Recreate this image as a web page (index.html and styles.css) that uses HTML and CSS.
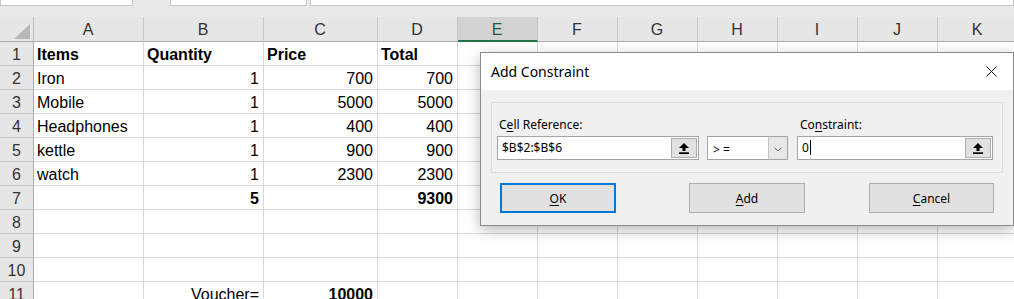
FILE: index.html
```html
<!DOCTYPE html>
<html lang="en">
<head>
  <meta charset="UTF-8" />
  <title>Add Constraint</title>
  <link rel="stylesheet" href="styles.css">
</head>
<body>
  <div class="formula-strip">
    <div class="name-box"></div>
    <div class="fx-box"></div>
    <div class="formula-box"></div>
  </div>

  <div class="sheet">
    <!-- column headers -->
    <div class="corner"><svg width="16" height="15" viewBox="0 0 16 15"><polygon points="16,0 16,15 0,15" fill="#b8b8b8"/></svg></div>
    <div class="col-head">A</div>
    <div class="col-head">B</div>
    <div class="col-head">C</div>
    <div class="col-head">D</div>
    <div class="col-head active">E</div>
    <div class="col-head">F</div>
    <div class="col-head">G</div>
    <div class="col-head">H</div>
    <div class="col-head">I</div>
    <div class="col-head">J</div>
    <div class="col-head">K</div>

    <div class="row-head">1</div>
    <div class="bold">Items</div><div class="bold">Quantity</div><div class="bold">Price</div><div class="bold">Total</div>
    <div></div><div></div><div></div><div></div><div></div><div></div><div></div>

    <div class="row-head">2</div>
    <div>Iron</div><div class="num">1</div><div class="num">700</div><div class="num">700</div>
    <div></div><div></div><div></div><div></div><div></div><div></div><div></div>

    <div class="row-head">3</div>
    <div>Mobile</div><div class="num">1</div><div class="num">5000</div><div class="num">5000</div>
    <div></div><div></div><div></div><div></div><div></div><div></div><div></div>

    <div class="row-head">4</div>
    <div>Headphones</div><div class="num">1</div><div class="num">400</div><div class="num">400</div>
    <div></div><div></div><div></div><div></div><div></div><div></div><div></div>

    <div class="row-head">5</div>
    <div>kettle</div><div class="num">1</div><div class="num">900</div><div class="num">900</div>
    <div></div><div></div><div></div><div></div><div></div><div></div><div></div>

    <div class="row-head">6</div>
    <div>watch</div><div class="num">1</div><div class="num">2300</div><div class="num">2300</div>
    <div></div><div></div><div></div><div></div><div></div><div></div><div></div>

    <div class="row-head">7</div>
    <div></div><div class="num bold">5</div><div></div><div class="num bold">9300</div>
    <div></div><div></div><div></div><div></div><div></div><div></div><div></div>

    <div class="row-head">8</div>
    <div></div><div></div><div></div><div></div>
    <div></div><div></div><div></div><div></div><div></div><div></div><div></div>

    <div class="row-head">9</div>
    <div></div><div></div><div></div><div></div>
    <div></div><div></div><div></div><div></div><div></div><div></div><div></div>

    <div class="row-head">10</div>
    <div></div><div></div><div></div><div></div>
    <div></div><div></div><div></div><div></div><div></div><div></div><div></div>

    <div class="row-head">11</div>
    <div></div><div class="num">Voucher=</div><div class="num bold">10000</div><div></div>
    <div></div><div></div><div></div><div></div><div></div><div></div><div></div>
  </div>

  <div class="dialog">
    <div class="dialog-title">
      <span>Add Constraint</span>
      <svg class="close" width="11" height="11" viewBox="0 0 11 11">
        <path d="M0.5 0.5 L10.5 10.5 M10.5 0.5 L0.5 10.5" stroke="#111" stroke-width="1"/>
      </svg>
    </div>

    <div class="dialog-body">
      <div class="group">
        <div class="field field-ref">
          <label>C<u>e</u>ll Reference:</label>
          <div class="picker">
            <span class="value">$B$2:$B$6</span>
            <span class="collapse-btn">
              <svg width="12" height="11" viewBox="0 0 12 11"><path d="M6 0 L11 5 H7.5 V8 H4.5 V5 H1 Z" fill="#000"/><rect x="1" y="9.3" width="10" height="1.7" fill="#000"/></svg>
            </span>
          </div>
        </div>

        <div class="field field-op">
          <div class="combo">
            <span class="value">&gt; =</span>
            <span class="combo-arrow">
              <svg width="8" height="5" viewBox="0 0 8 5"><path d="M0.5 0.5 L4 4 L7.5 0.5" fill="none" stroke="#666" stroke-width="1"/></svg>
            </span>
          </div>
        </div>

        <div class="field field-con">
          <label>Co<u>n</u>straint:</label>
          <div class="picker">
            <span class="value">0<span class="caret"></span></span>
            <span class="collapse-btn">
              <svg width="12" height="11" viewBox="0 0 12 11"><path d="M6 0 L11 5 H7.5 V8 H4.5 V5 H1 Z" fill="#000"/><rect x="1" y="9.3" width="10" height="1.7" fill="#000"/></svg>
            </span>
          </div>
        </div>
      </div>

      <div class="actions">
        <button class="btn btn-ok"><u>O</u>K</button>
        <button class="btn btn-add"><u>A</u>dd</button>
        <button class="btn btn-cancel"><u>C</u>ancel</button>
      </div>
    </div>
  </div>
</body>
</html>
```

FILE: styles.css
```css
* {
  margin: 0;
  padding: 0;
  box-sizing: border-box;
}

body {
  width: 1014px;
  height: 299px;
  overflow: hidden;
  background: #fff;
  font-family: "Liberation Sans", Arial, sans-serif;
  color: #000;
  position: relative;
}

/* top strip with the bottom of name box / formula bar */
.formula-strip {
  height: 17px;
  background: #e9e9e9;
  display: flex;
  align-items: flex-start;
}

.formula-strip div {
  height: 6px;
  background: #fff;
  border: 1px solid #c6c6c6;
  border-top: none;
}

.name-box {
  width: 133px;
}

.fx-box {
  width: 137px;
  margin-left: 37px;
}

.formula-box {
  flex: 1;
  margin-left: 3px;
}

/* grid */
.sheet {
  display: grid;
  grid-template-columns: 34px 110px 120px 114px repeat(8, 80px);
  grid-template-rows: 25px;
  grid-auto-rows: 24px;
  width: 1018px;
}

.sheet > div {
  border-right: 1px solid #d9d9d9;
  border-bottom: 1px solid #d9d9d9;
  padding: 2px 4px 0 3px;
  font-size: 16px;
  line-height: 21px;
  white-space: nowrap;
  overflow: hidden;
}

.sheet > .corner {
  background: #e6e6e6;
  border-right: 1px solid #bdbdbd;
  border-bottom: 1px solid #ababab;
  display: flex;
  align-items: flex-end;
  justify-content: flex-end;
  padding: 0 3px 2px 0;
}

.sheet > .col-head {
  background: #e6e6e6;
  border-right: 1px solid #c8c8c8;
  border-bottom: 1px solid #ababab;
  text-align: center;
  color: #333;
  font-size: 16px;
  padding-top: 2px;
}

.sheet > .col-head.active {
  background: #d2d2d2;
  border-bottom: 2px solid #217346;
  color: #1e5a3a;
}

.sheet > .row-head {
  background: #e6e6e6;
  border-right: 1px solid #ababab;
  border-bottom: 1px solid #c8c8c8;
  text-align: center;
  color: #333;
  font-size: 16px;
  padding: 2px 0 0 0;
}

.sheet > .num {
  text-align: right;
}

.sheet > .bold {
  font-weight: 700;
}

/* dialog, floating over the sheet */
.dialog {
  position: absolute;
  left: 480px;
  top: 52px;
  width: 534px;
  height: 174px;
  background: #f0f0f0;
  border: 1px solid #8a8a8a;
  box-shadow: 0 4px 14px rgba(0, 0, 0, 0.28);
  font-family: "Noto Sans", "Open Sans", sans-serif;
  font-size: 12px;
  color: #000;
}

.dialog-title {
  height: 37px;
  background: #fff;
  display: flex;
  align-items: center;
  justify-content: space-between;
  padding: 0 16px 0 10px;
  font-size: 14px;
}

.dialog-body {
  padding: 12px 10px 0 10px;
}

.group {
  height: 71px;
  border: 1px solid #dcdcdc;
  display: flex;
  align-items: flex-end;
  padding: 0 0 12px 5px;
}

.field {
  display: flex;
  flex-direction: column;
}

.field label {
  line-height: 16px;
  margin-bottom: 3px;
  padding-left: 2px;
}

.field u {
  text-underline-offset: 2px;
}

.picker,
.combo {
  height: 24px;
  background: #fff;
  border: 1px solid #a5a5a5;
  display: flex;
  align-items: stretch;
}

.field-ref .picker {
  width: 202px;
}

.field-op {
  margin-left: 8px;
}

.combo {
  width: 81px;
}

.field-con {
  margin-left: 9px;
}

.field-con .picker {
  width: 196px;
}

.field-con label {
  padding-left: 3px;
}

.picker .value,
.combo .value {
  flex: 1;
  display: flex;
  align-items: center;
  padding-left: 4px;
  padding-bottom: 1px;
}

.combo .value {
  padding-top: 3px;
  padding-left: 5px;
}

.caret {
  display: inline-block;
  width: 1px;
  height: 15px;
  background: #000;
  margin-left: 1px;
}

.collapse-btn {
  width: 26px;
  margin: 1px;
  background: #e1e1e1;
  border: 1px solid #adadad;
  display: flex;
  align-items: center;
  justify-content: center;
}

.combo-arrow {
  width: 19px;
  background: #e8e8e8;
  border-left: 1px solid #c4c4c4;
  display: flex;
  align-items: center;
  justify-content: center;
  padding-top: 2px;
}

.actions {
  display: flex;
  padding-top: 10px;
}

.btn {
  height: 30px;
  background: #e1e1e1;
  border: 1px solid #adadad;
  font-family: inherit;
  font-size: 12px;
  color: #000;
}

.btn u {
  text-underline-offset: 2px;
}

.btn-ok {
  width: 116px;
  margin-left: 9px;
  border: 2px solid #0078d7;
}

.btn-add {
  width: 116px;
  margin-left: 73px;
}

.btn-cancel {
  width: 125px;
  margin-left: 64px;
}
```
